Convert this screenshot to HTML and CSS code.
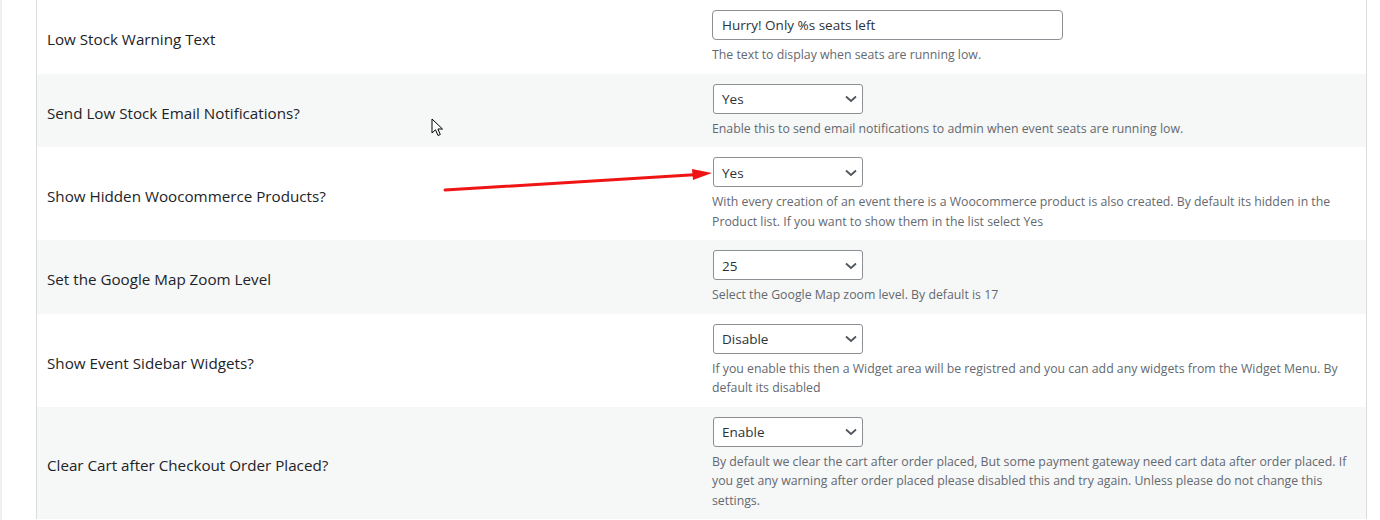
FILE: index.html
```html
<!DOCTYPE html>
<html>
<head>
<meta charset="utf-8">
<link rel="stylesheet" href="styles.css">
</head>
<body>
<div class="page">
  <div class="panel">
    <table class="form-table">
      <tr>
        <th>Low Stock Warning Text</th>
        <td>
          <div class="text-input">Hurry! Only %s seats left</div>
          <p class="description">The text to display when seats are running low.</p>
        </td>
      </tr>
      <tr>
        <th>Send Low Stock Email Notifications?</th>
        <td>
          <div class="select"><span>Yes</span><svg class="chev" viewBox="0 0 12 8" width="12" height="8"><path d="M1 1.5 L6 6 L11 1.5" fill="none" stroke="#50575e" stroke-width="1.8"/></svg></div>
          <p class="description">Enable this to send email notifications to admin when event seats are running low.</p>
        </td>
      </tr>
      <tr>
        <th>Show Hidden Woocommerce Products?</th>
        <td>
          <div class="select"><span>Yes</span><svg class="chev" viewBox="0 0 12 8" width="12" height="8"><path d="M1 1.5 L6 6 L11 1.5" fill="none" stroke="#50575e" stroke-width="1.8"/></svg></div>
          <p class="description">With every creation of an event there is a Woocommerce product is also created. By default its hidden in the Product list. If you want to show them in the list select Yes</p>
        </td>
      </tr>
      <tr>
        <th>Set the Google Map Zoom Level</th>
        <td>
          <div class="select"><span>25</span><svg class="chev" viewBox="0 0 12 8" width="12" height="8"><path d="M1 1.5 L6 6 L11 1.5" fill="none" stroke="#50575e" stroke-width="1.8"/></svg></div>
          <p class="description">Select the Google Map zoom level. By default is 17</p>
        </td>
      </tr>
      <tr>
        <th>Show Event Sidebar Widgets?</th>
        <td>
          <div class="select"><span>Disable</span><svg class="chev" viewBox="0 0 12 8" width="12" height="8"><path d="M1 1.5 L6 6 L11 1.5" fill="none" stroke="#50575e" stroke-width="1.8"/></svg></div>
          <p class="description">If you enable this then a Widget area will be registred and you can add any widgets from the Widget Menu. By default its disabled</p>
        </td>
      </tr>
      <tr>
        <th>Clear Cart after Checkout Order Placed?</th>
        <td>
          <div class="select"><span>Enable</span><svg class="chev" viewBox="0 0 12 8" width="12" height="8"><path d="M1 1.5 L6 6 L11 1.5" fill="none" stroke="#50575e" stroke-width="1.8"/></svg></div>
          <p class="description">By default we clear the cart after order placed, But some payment gateway need cart data after order placed. If you get any warning after order placed please disabled this and try again. Unless please do not change this settings.</p>
        </td>
      </tr>
    </table>
  </div>
  <svg class="annot-arrow" width="280" height="30" viewBox="0 0 280 30">
    <line x1="3" y1="21" x2="256" y2="5.5" stroke="#f01414" stroke-width="3" stroke-linecap="round"/>
    <polygon points="250,0 270,4 251,11" fill="#f01414"/>
  </svg>
  <svg class="cursor" width="14" height="20" viewBox="0 0 14 20">
    <path d="M1 1 L1 15 L4.5 11.8 L7 17.5 L9.3 16.5 L6.9 11 L11.5 11 Z" fill="#fff" stroke="#000" stroke-width="1" stroke-linejoin="round"/>
  </svg>
</div>
</body>
</html>
```
FILE: styles.css
```css
html, body {
  margin: 0;
  padding: 0;
  background: #ffffff;
}
.page {
  position: relative;
  height: 520px;
  overflow: hidden;
  border-left: 2px solid #f0f0f1;
  padding-left: 34px;
  padding-right: 13px;
  font-family: "Open Sans", "Noto Sans", sans-serif;
}
.panel {
  border-left: 1px solid #dcdcde;
  border-right: 1px solid #dcdcde;
  background: #fff;
}
.form-table {
  width: 100%;
  border-collapse: collapse;
  table-layout: fixed;
}
.form-table tr:nth-child(even) {
  background: #f6f7f7;
}
.form-table th {
  width: 655px;
  padding: 5px 0 0 10px;
  text-align: left;
  font-weight: 400;
  font-size: 15.2px;
  color: #1d2327;
  vertical-align: middle;
}
.form-table td {
  padding: 10px 10px 9px 10px;
  vertical-align: top;
}
.text-input {
  box-sizing: border-box;
  width: 351px;
  height: 30px;
  border: 1px solid #8c8f94;
  border-radius: 4px;
  background: #fff;
  padding: 0 9px;
  font-size: 13.5px;
  line-height: 29px;
  color: #2c3338;
}
.select {
  box-sizing: border-box;
  width: 150px;
  height: 30px;
  margin-left: 1px;
  border: 1px solid #8c8f94;
  border-radius: 3px;
  background: #fff;
  padding: 1px 0 0 8px;
  display: flex;
  align-items: center;
  justify-content: space-between;
  font-size: 13.5px;
  color: #2c3338;
}
.select .chev {
  margin-right: 5px;
}
.description {
  margin: 5px 0 0 0;
  font-size: 12.3px;
  line-height: 19.5px;
  color: #646970;
}
.annot-arrow {
  position: absolute;
  left: 440px;
  top: 169px;
}
.cursor {
  position: absolute;
  left: 429px;
  top: 118px;
}
```
